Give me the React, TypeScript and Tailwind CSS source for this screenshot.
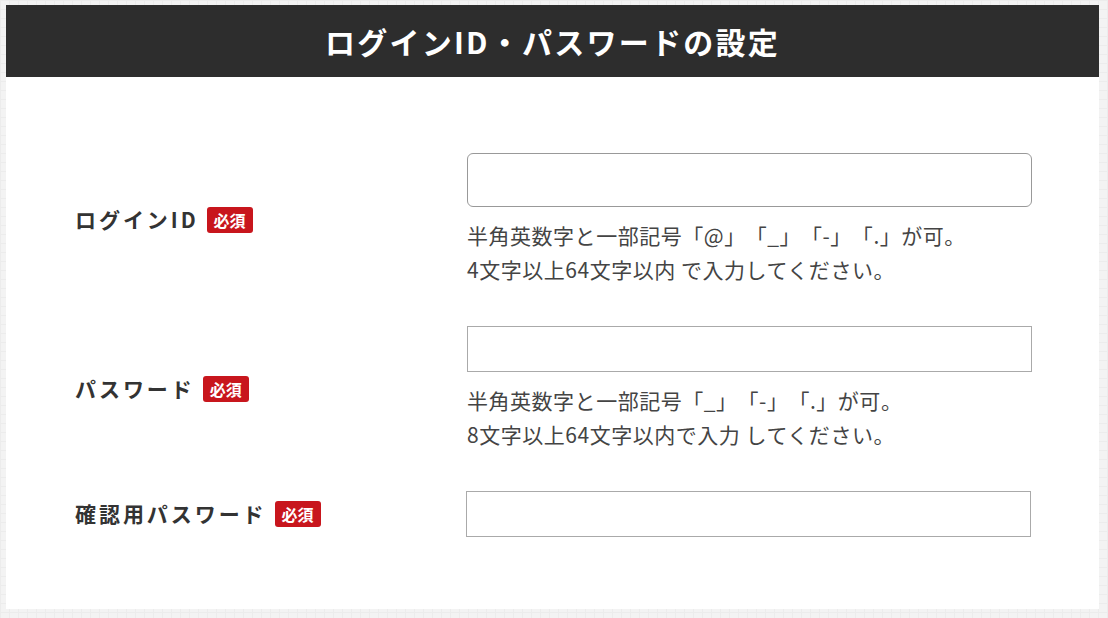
import React from 'react';

const jp = "font-['Noto_Sans_CJK_JP','Noto_Sans',sans-serif]";

function Badge() {
  return (
    <span className="inline-flex h-[26px] w-[46px] items-center justify-center rounded-[3px] bg-[#c8161d] text-[16px] font-bold leading-none text-white">
      必須
    </span>
  );
}

function Label({ text }: { text: string }) {
  return (
    <div className="flex items-center gap-2">
      <span className="text-[21px] font-bold tracking-[0.14em] text-[#333]">{text}</span>
      <Badge />
    </div>
  );
}

function Help({ lines }: { lines: string[] }) {
  return (
    <div className="mt-[11px] text-[21px] leading-[34px] tracking-[0.025em] text-[#444] [text-spacing-trim:space-all]">
      {lines.map((l) => (
        <p key={l}>{l}</p>
      ))}
    </div>
  );
}

export default function App() {
  return (
    <div
      className={`${jp} min-h-[618px] w-full bg-[#f3f3f3] bg-[linear-gradient(#ececec_1px,transparent_1px),linear-gradient(90deg,#ececec_1px,transparent_1px)] bg-[size:9px_9px] pt-[5px] pl-[6px]`}
    >
      <div className="w-[1093px] bg-white pb-[72px]">
        {/* Header */}
        <div className="flex h-[72px] items-center justify-center bg-[#2d2d2d]">
          <h1 className="text-[30px] font-bold tracking-[0.075em] text-white">ログインID・パスワードの設定</h1>
        </div>

        <div className="flex flex-col gap-[40px] px-[69px] pt-[76px]">
          {/* Login ID */}
          <div className="grid grid-cols-[392px_1fr] items-center">
            <Label text="ログインID" />
            <div>
              <input className="block h-[54px] w-[565px] rounded-[6px] border border-[#999] bg-white outline-none" />
              <Help
                lines={[
                  '半角英数字と一部記号「@」「_」「-」「.」が可。',
                  '4文字以上64文字以内 で入力してください。',
                ]}
              />
            </div>
          </div>

          {/* Password */}
          <div className="grid grid-cols-[392px_1fr] items-center">
            <Label text="パスワード" />
            <div>
              <input type="password" className="block h-[46px] w-[565px] border border-[#aaa] bg-white outline-none" />
              <Help
                lines={[
                  '半角英数字と一部記号「_」「-」「.」が可。',
                  '8文字以上64文字以内で入力 してください。',
                ]}
              />
            </div>
          </div>

          {/* Confirm */}
          <div className="grid grid-cols-[392px_1fr] items-center">
            <Label text="確認用パスワード" />
            <div>
              <input type="password" className="-ml-px block h-[46px] w-[565px] border border-[#aaa] bg-white outline-none" />
            </div>
          </div>
        </div>
      </div>
    </div>
  );
}
